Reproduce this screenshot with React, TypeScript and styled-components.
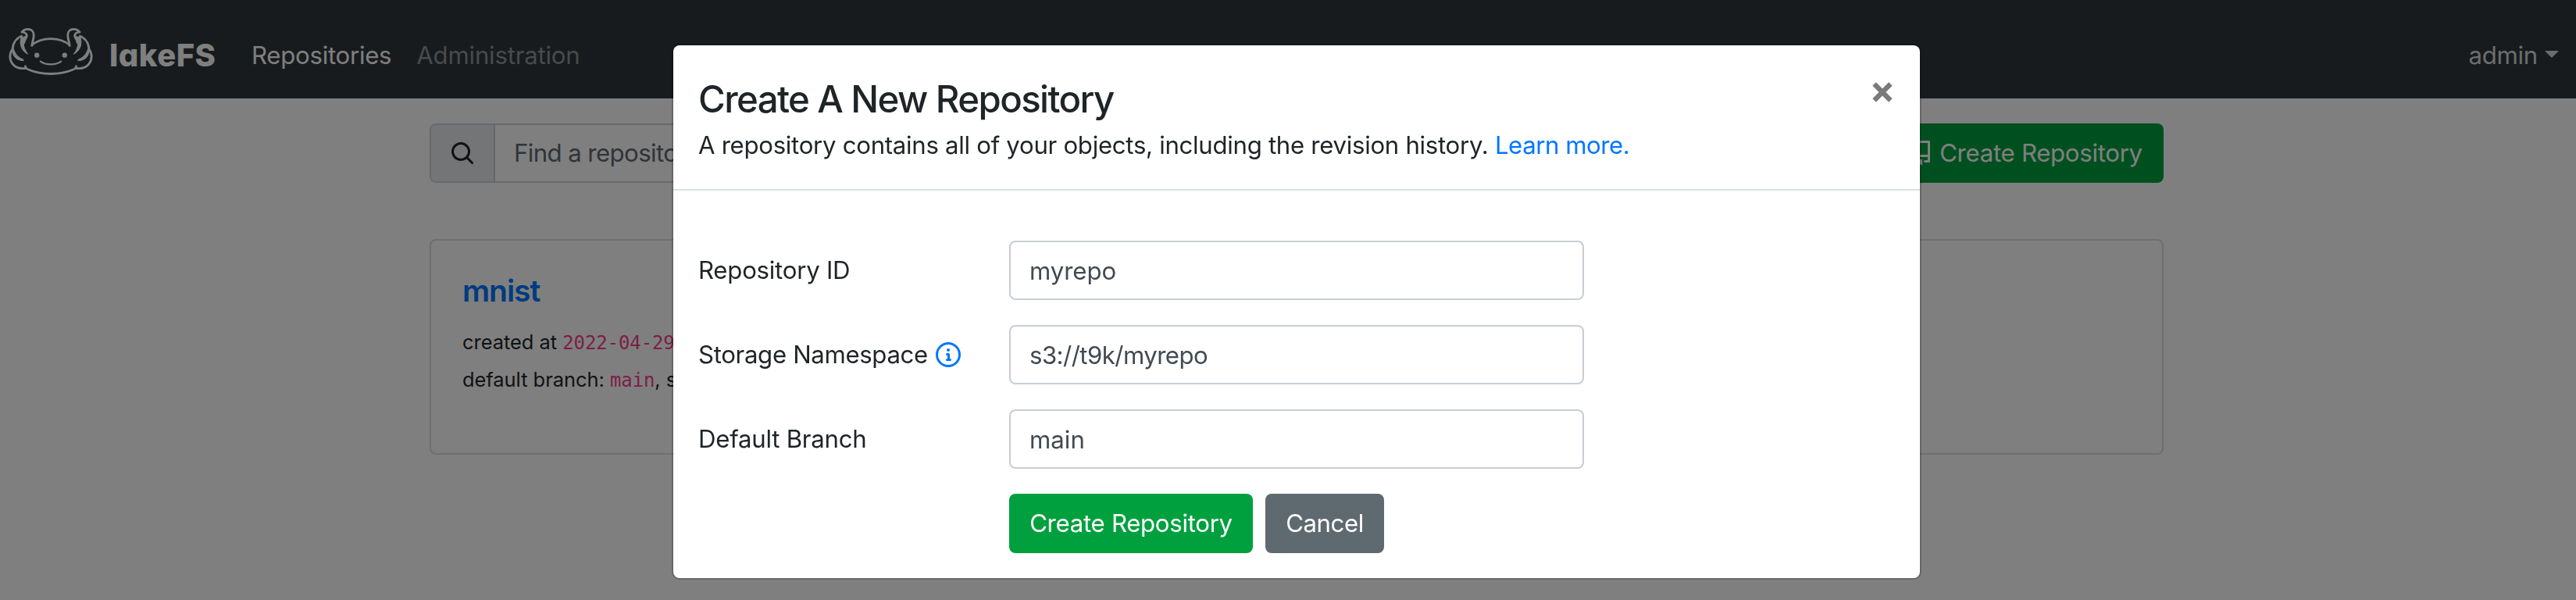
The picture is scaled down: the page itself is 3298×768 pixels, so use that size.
import React from 'react';
import styled, { createGlobalStyle } from 'styled-components';

const GlobalStyle = createGlobalStyle`
  *, *::before, *::after { box-sizing: border-box; }
  body {
    margin: 0;
    background: #ffffff;
    color: #1f2427;
    font-family: Inter, 'Liberation Sans', sans-serif;
    font-size: 31.2px;
    line-height: 48px;
    letter-spacing: -0.3px;
    overflow: hidden;
  }
`;

const Page = styled.div`
  height: 768px;
  overflow: hidden;
`;

const Navbar = styled.nav`
  display: flex;
  align-items: center;
  height: 126px;
  padding: 15px 22px 0 11px;
  background: #2e363a;
`;

const Brand = styled.a`
  display: flex;
  align-items: center;
  color: #ffffff;
`;

const BrandName = styled.span`
  width: 203px;
  padding-left: 21px;
  font-size: 40px;
  font-weight: 800;
  letter-spacing: 0.5px;
  font-feature-settings: 'cv11';
`;

const Mascot = styled.svg`
  width: 108px;
  height: 62px;
  margin-top: -9px;
`;

const NavLink = styled.a<{ $color: string; $spacing?: number }>`
  color: ${(p) => p.$color};
  letter-spacing: ${(p) => p.$spacing ?? -0.28}px;
  margin-right: 32px;
`;

const UserMenu = styled.a`
  display: flex;
  align-items: center;
  gap: 9px;
  margin-left: auto;
  color: #dadbdc;
`;

const Caret = styled.span`
  border-top: 9.6px solid currentColor;
  border-left: 9.6px solid transparent;
  border-right: 9.6px solid transparent;
  margin-top: -3px;
`;

const Container = styled.main`
  width: 2220px;
  margin-left: 550px;
  padding-top: 32px;
`;

const Toolbar = styled.div`
  display: flex;
  justify-content: space-between;
`;

const SearchGroup = styled.div`
  display: flex;
  width: 1100px;
  height: 76px;
  border: 2px solid #ced3d8;
  border-radius: 8px;
  overflow: hidden;
`;

const SearchAddon = styled.span`
  display: flex;
  align-items: center;
  padding: 0 24px;
  background: #e8ebee;
  border-right: 2px solid #ced3d8;
`;

const SearchText = styled.span`
  padding: 12px 24px;
  color: #5f6a70;
  letter-spacing: -0.6px;
`;

const Button = styled.button<{ $color: string; $width: number; $spacing?: number }>`
  display: inline-flex;
  align-items: center;
  justify-content: center;
  gap: 8px;
  width: ${(p) => p.$width}px;
  height: 76px;
  padding: 0;
  border: 0;
  border-radius: 8px;
  background: ${(p) => p.$color};
  color: #ffffff;
  font: inherit;
  letter-spacing: ${(p) => p.$spacing ?? -0.3}px;
`;

const RepoCard = styled.section`
  height: 276px;
  margin-top: 72px;
  padding: 40px;
  border: 2px solid #dedede;
  border-radius: 8px;
`;

const RepoName = styled.h5`
  margin: 0 0 18px;
  color: #0077ff;
  font-size: 39px;
  font-weight: 600;
  letter-spacing: -1.05px;
  line-height: 48px;
`;

const RepoMeta = styled.p`
  height: 48px;
  margin: 0;
  font-size: 25.4px;
  letter-spacing: 0;
  white-space: nowrap;
`;

const Code = styled.code`
  color: #f83e8c;
  font-family: 'DejaVu Sans Mono', monospace;
  font-size: 24px;
  letter-spacing: -0.1px;
  line-height: 1;
`;

const Icon = styled.svg<{ $color?: string }>`
  width: 32px;
  height: 32px;
  flex: none;
  fill: ${(p) => p.$color ?? 'currentColor'};
`;

const Backdrop = styled.div`
  position: fixed;
  inset: 0;
  display: flex;
  align-items: flex-start;
  justify-content: center;
  padding: 56px 0 0 22px;
  background: rgba(0, 0, 0, 0.5);
`;

const Dialog = styled.div`
  width: 1600px;
  height: 686px;
  border: 2px solid rgba(0, 0, 0, 0.2);
  border-radius: 10px;
  background: #ffffff;
  background-clip: padding-box;
`;

const DialogHeader = styled.header`
  display: flex;
  justify-content: space-between;
  height: 186px;
  padding: 32px;
  border-bottom: 2px solid #dce0e4;
`;

const DialogTitle = styled.h4`
  margin: 0;
  font-size: 47.4px;
  font-weight: 500;
  letter-spacing: -1.6px;
  line-height: 74px;
`;

const DialogLead = styled.p`
  margin: -2px 0 0;
`;

const Link = styled.a`
  color: #0077ff;
  letter-spacing: -0.47px;
`;

const CloseIcon = styled.svg`
  width: 26px;
  height: 26px;
  margin: 15px 3px 0 0;
`;

const Form = styled.form`
  display: flex;
  flex-direction: column;
  gap: 32px;
  padding: 64px 32px 0;
`;

const Field = styled.div`
  display: grid;
  grid-template-columns: 398px auto;
  align-items: center;
  justify-content: start;
`;

const Label = styled.label<{ $spacing: number }>`
  display: flex;
  align-items: center;
  gap: 10px;
  letter-spacing: ${(p) => p.$spacing}px;
`;

const TextInput = styled.input<{ $spacing: number }>`
  width: 736px;
  height: 76px;
  padding: 1px 24px 0;
  border: 2px solid #c8cdd3;
  border-radius: 8px;
  color: #424a51;
  background: #ffffff;
  font: inherit;
  letter-spacing: ${(p) => p.$spacing}px;
  outline: 0;
`;

const Actions = styled.div`
  display: flex;
  gap: 16px;
  padding-left: 398px;
`;

const SearchIcon = () => (
  <Icon viewBox="0 0 16 16">
    <path fillRule="evenodd" d="M11.5 7a4.499 4.499 0 11-8.998 0A4.499 4.499 0 0111.5 7zm-.82 4.74a6 6 0 111.06-1.06l3.04 3.04a.75.75 0 11-1.06 1.06l-3.04-3.04z" />
  </Icon>
);

const RepoIcon = () => (
  <Icon viewBox="0 0 16 16">
    <path fillRule="evenodd" d="M2 2.5A2.5 2.5 0 014.5 0h8.75a.75.75 0 01.75.75v12.5a.75.75 0 01-.75.75h-2.5a.75.75 0 110-1.5h1.75v-2h-8a1 1 0 00-.714 1.7.75.75 0 01-1.072 1.05A2.495 2.495 0 012 11.5v-9zm10.5-1V9h-8c-.356 0-.694.074-1 .208V2.5a1 1 0 011-1h8zM5 12.25v3.25a.25.25 0 00.4.2l1.45-1.087a.25.25 0 01.3 0L8.6 15.7a.25.25 0 00.4-.2v-3.25a.25.25 0 00-.25-.25h-3.5a.25.25 0 00-.25.25z" />
  </Icon>
);

const InfoIcon = () => (
  <Icon viewBox="0 0 16 16" $color="#0077ff">
    <path fillRule="evenodd" d="M8 1.5a6.5 6.5 0 100 13 6.5 6.5 0 000-13zM0 8a8 8 0 1116 0A8 8 0 010 8zm6.5-.25A.75.75 0 017.25 7h1a.75.75 0 01.75.75v2.75h.25a.75.75 0 010 1.5h-2a.75.75 0 010-1.5h.25v-2h-.25a.75.75 0 01-.75-.75zM8 6a1 1 0 100-2 1 1 0 000 2z" />
  </Icon>
);

/* One side of the axolotl: horn, gills and cheek. The other side mirrors it. */
const MascotSide = () => (
  <g>
    <path d="M112 98 C111 84 119 72 119 54 C119 38 109 31 97 31 C86 31 78 35 73 42 C86 42 93 48 92 58 C91 67 81 72 81 86" />
    <path fill="#ffffff" strokeWidth="3" d="M73 56 C60 84 70 114 96 127 C86 112 80 100 80 86 C80 74 90 68 90 56 L79 62 Z" />
    <path d="M75 56 C54 63 39 82 37 108 C25 124 24 148 37 164 C47 179 66 184 90 181" />
    <path fill="#ffffff" strokeWidth="3" d="M35 104 C36 134 50 152 80 152 L78 147 C58 140 46 124 40 104 Z" />
  </g>
);

const MascotLogo = () => (
  <Mascot viewBox="22 24 325 186" fill="none" stroke="#ffffff" strokeWidth="8.5" strokeLinecap="butt" strokeLinejoin="round">
    <MascotSide />
    <g transform="translate(369 0) scale(-1 1)">
      <MascotSide />
    </g>
    <path d="M110 93 C150 59 219 59 259 93" />
    <path d="M86 170 C88 182 90 183 100 187 C150 208 219 208 269 187 C279 183 281 182 283 170" />
    <path strokeLinecap="round" strokeWidth="7" d="M145 155 C166 170 203 170 224 155" />
    <circle cx="131" cy="131" r="9.5" fill="#ffffff" stroke="none" />
    <circle cx="238" cy="131" r="9.5" fill="#ffffff" stroke="none" />
  </Mascot>
);

export default function App() {
  return (
    <Page>
      <GlobalStyle />
      <Navbar>
        <Brand>
          <MascotLogo />
          <BrandName>lakeFS</BrandName>
        </Brand>
        <NavLink $color="#ffffff">Repositories</NavLink>
        <NavLink $color="#909597" $spacing={-0.22}>Administration</NavLink>
        <UserMenu>
          admin
          <Caret />
        </UserMenu>
      </Navbar>

      <Container>
        <Toolbar>
          <SearchGroup>
            <SearchAddon>
              <SearchIcon />
            </SearchAddon>
            <SearchText>Find a repository...</SearchText>
          </SearchGroup>
          <Button $color="#00a03e" $width={354}>
            <RepoIcon />
            Create Repository
          </Button>
        </Toolbar>
        <RepoCard>
          <RepoName>mnist</RepoName>
          <RepoMeta>
            created at <Code>2022-04-29</Code>
          </RepoMeta>
          <RepoMeta>
            default branch: <Code>main</Code>, storage
          </RepoMeta>
        </RepoCard>
      </Container>

      <Backdrop>
        <Dialog role="dialog">
          <DialogHeader>
            <div>
              <DialogTitle>Create A New Repository</DialogTitle>
              <DialogLead>
                A repository contains all of your objects, including the revision history. <Link>Learn more.</Link>
              </DialogLead>
            </div>
            <CloseIcon viewBox="0 0 26 26" stroke="#7a7a7a" strokeWidth="6.4">
              <path d="M2.6 2.6 L23.4 23.4 M23.4 2.6 L2.6 23.4" />
            </CloseIcon>
          </DialogHeader>
          <Form>
            <Field>
              <Label $spacing={-0.25}>Repository ID</Label>
              <TextInput $spacing={-0.1} defaultValue="myrepo" />
            </Field>
            <Field>
              <Label $spacing={-0.35}>
                Storage Namespace
                <InfoIcon />
              </Label>
              <TextInput $spacing={-0.57} defaultValue="s3://t9k/myrepo" />
            </Field>
            <Field>
              <Label $spacing={-0.25}>Default Branch</Label>
              <TextInput $spacing={0} defaultValue="main" />
            </Field>
            <Actions>
              <Button type="button" $color="#00a03e" $width={312}>
                Create Repository
              </Button>
              <Button type="button" $color="#5f6a70" $width={152} $spacing={-0.45}>
                Cancel
              </Button>
            </Actions>
          </Form>
        </Dialog>
      </Backdrop>
    </Page>
  );
}
